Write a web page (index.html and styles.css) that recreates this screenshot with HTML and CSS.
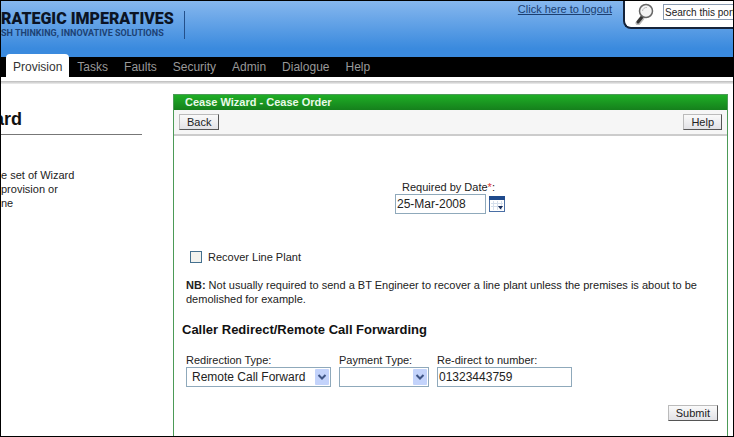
FILE: index.html
```html
<!DOCTYPE html>
<html lang="en">
    <head>
        <meta charset="utf-8">
        <title>Cease Wizard - Cease Order</title>
        <link rel="stylesheet" href="styles.css">
    </head>
    <body>

        <header class="header">
            <div class="logo">
                <div class="logo-name">RATEGIC IMPERATIVES</div>
                <div class="logo-tagline">SH THINKING, INNOVATIVE SOLUTIONS</div>
            </div>

            <a href="#" class="logout">Click here to logout</a>

            <form class="search">
                <svg class="search-icon" width="20" height="22" viewBox="0 0 20 22">
                    <path d="M3 20 L7 15" stroke="#bbb" stroke-width="5" stroke-linecap="round"/>
                    <path d="M3 19 L7 14" stroke="#333" stroke-width="3" stroke-linecap="round"/>
                    <circle cx="11" cy="8" r="6.5" fill="#f4f4f4" stroke="#666" stroke-width="1.5"/>
                    <path d="M7.5 8 A4 4 0 0 1 12 4.5" fill="none" stroke="#bbb"/>
                </svg>
                <input type="text" class="search-box" value="Search this port" aria-label="Search this portal">
            </form>
        </header>

        <nav class="menu">
            <a href="#" class="active">Provision</a>
            <a href="#">Tasks</a>
            <a href="#">Faults</a>
            <a href="#">Security</a>
            <a href="#">Admin</a>
            <a href="#">Dialogue</a>
            <a href="#">Help</a>
        </nav>

        <div class="divider"></div>

        <div class="content">

            <aside class="sidebar">
                <h1>ard</h1>
                <p>e set of Wizard<br>provision or<br>ne</p>
            </aside>

            <main class="panel">
                <h2 class="panel-title">Cease Wizard - Cease Order</h2>

                <div class="toolbar">
                    <button type="button">Back</button>
                    <button type="button">Help</button>
                </div>

                <form class="order">

                    <div class="date">
                        <label for="date">Required by Date<span class="required">*</span>:</label>
                        <div class="date-row">
                            <input type="text" id="date" value="25-Mar-2008">
                            <button type="button" class="calendar" aria-label="Pick a date">
                                <svg width="16" height="16" viewBox="0 0 16 16">
                                    <rect x="0.5" y="0.5" width="15" height="15" fill="#fff" stroke="#4a6fa5"/>
                                    <rect width="16" height="4" fill="#1f4a8c"/>
                                    <path d="M2 7.5H14M2 10.5H14M4.5 5V14M8.5 5V14M12.5 5V14" stroke="#d5dfec"/>
                                    <path d="M9 10H14L11.5 13.5Z" fill="#1a2f5c"/>
                                </svg>
                            </button>
                        </div>
                    </div>

                    <div class="check">
                        <input type="checkbox" id="recover">
                        <label for="recover">Recover Line Plant</label>
                    </div>

                    <p class="note"><b>NB:</b> Not usually required to send a BT Engineer to recover a line plant unless the premises is about to be demolished for example.</p>

                    <h3>Caller Redirect/Remote Call Forwarding</h3>

                    <div class="fields">
                        <div class="field redirection">
                            <label for="redirection">Redirection Type:</label>
                            <div class="select">
                                <select id="redirection">
                                    <option>Remote Call Forward</option>
                                </select>
                                <svg class="arrow" width="14" height="16" viewBox="0 0 14 16">
                                    <rect width="14" height="16" rx="1" fill="#c3d3fb"/>
                                    <path d="M3.5 6 L7 9.5 L10.5 6" fill="none" stroke="#3f5585" stroke-width="2"/>
                                </svg>
                            </div>
                        </div>

                        <div class="field payment">
                            <label for="payment">Payment Type:</label>
                            <div class="select">
                                <select id="payment">
                                    <option></option>
                                </select>
                                <svg class="arrow" width="14" height="16" viewBox="0 0 14 16">
                                    <rect width="14" height="16" rx="1" fill="#c3d3fb"/>
                                    <path d="M3.5 6 L7 9.5 L10.5 6" fill="none" stroke="#3f5585" stroke-width="2"/>
                                </svg>
                            </div>
                        </div>

                        <div class="field number">
                            <label for="number">Re-direct to number:</label>
                            <input type="text" id="number" value="01323443759">
                        </div>
                    </div>

                    <div class="actions">
                        <button type="submit">Submit</button>
                    </div>

                </form>
            </main>

        </div>

    </body>
</html>
```

FILE: styles.css
```css
* {
    margin: 0;
    padding: 0;
    box-sizing: border-box;
}

body {
    display: flex;
    flex-direction: column;
    min-height: 100vh;
    border: 1px solid #000;
    background: #fff;
    color: #222;
    font-family: "Liberation Sans", Arial, sans-serif;
    font-size: 11px;
    line-height: 14px;
}

input, select, button {
    font-family: inherit;
    font-size: 12px;
    color: #222;
}

/* header */

.header {
    display: flex;
    align-items: flex-start;
    height: 56px;
    background: linear-gradient(#86b7ee, #3a8ade 85%);
}

.logo {
    width: 184px;
    margin-top: 10px;
    border-right: 1px solid #24508a;
    white-space: nowrap;
    color: #0b1424;
    font-family: Roboto, sans-serif;
}

.logo-name {
    font-size: 16px;
    line-height: 16px;
    font-weight: 900;
}

.logo-tagline {
    font-size: 9px;
    line-height: 12px;
    font-weight: bold;
    color: #1d4274;
}

.logout {
    margin-top: 1px;
    margin-left: auto;
    margin-right: 11px;
    color: #1c3f70;
}

.search {
    display: flex;
    width: 110px;
    height: 28px;
    padding: 2px 0 0 10px;
    gap: 8px;
    background: #fff;
    border: solid #14233b;
    border-width: 0 0 2px 2px;
    border-bottom-left-radius: 8px;
}

.search-icon {
    flex: none;
}

.search-box {
    flex: 1;
    min-width: 0;
    height: 16px;
    margin-top: 1px;
    border: 1px solid #8a9bb0;
    border-right: 0;
    font-size: 10px;
    text-indent: 1px;
}

/* menu */

.menu {
    display: flex;
    height: 20px;
    padding-left: 5px;
    background: #000;
}

.menu a {
    padding: 0 8px;
    color: #999;
    font-size: 12px;
    line-height: 20px;
    text-decoration: none;
}

.menu a.active {
    height: 23px;
    margin-top: -3px;
    padding: 3px 7px 0;
    background: #fff;
    border-radius: 4px 4px 0 0;
    color: #333;
}

.divider {
    height: 3px;
    margin-top: 4px;
    background: linear-gradient(#bbb, #eee);
}

/* content */

.content {
    display: flex;
    flex: 1;
    padding: 10px 5px 0 0;
}

.sidebar {
    width: 141px;
    margin-right: 31px;
    overflow: hidden;
}

.sidebar h1 {
    padding: 14px 0 4px;
    border-bottom: 1px solid #777;
    color: #111;
    font-size: 18px;
    line-height: 22px;
    text-indent: -7px;
}

.sidebar p {
    margin-top: 33px;
    white-space: nowrap;
}

.panel {
    flex: 1;
    border: 1px solid #4c9a57;
    border-bottom: 0;
}

.panel-title {
    height: 15px;
    padding-left: 11px;
    background: linear-gradient(#1fae26, #15801c);
    color: #e9f9e9;
    font-size: 11px;
    line-height: 15px;
}

.toolbar {
    display: flex;
    justify-content: space-between;
    padding: 4px 5px;
    background: #f6f6f6;
    border-bottom: 2px solid #ccc;
}

.toolbar button, .actions button {
    height: 16px;
    padding: 0 7px;
    background: linear-gradient(#fafafa, #e2e2e6);
    border: 1px solid #bbb;
    border-right-color: #555;
    border-bottom-color: #555;
    font-size: 11px;
    line-height: 14px;
}

/* order form */

.order {
    padding: 44px 9px 0 8px;
}

.order input[type="text"] {
    width: 100%;
    height: 20px;
    padding: 0 1px;
    border: 1px solid #8fa9bb;
}

.date {
    width: 110px;
    margin: 0 auto;
}

.date label {
    display: block;
    padding-left: 7px;
}

.required {
    color: #d33;
}

.date-row {
    display: flex;
    align-items: center;
    gap: 3px;
}

.calendar {
    display: flex;
    border: 0;
    background: none;
}

.check {
    display: flex;
    align-items: center;
    gap: 6px;
    margin: 36px 0 14px 8px;
}

.check input {
    appearance: none;
    width: 12px;
    height: 12px;
    border: 1px solid #44708f;
    background: #f2f2ee;
}

.note {
    padding-left: 4px;
}

.order h3 {
    margin: 16px 0 15px;
    color: #111;
    font-size: 13px;
    line-height: 16px;
}

.fields {
    display: flex;
    gap: 8px;
    padding-left: 4px;
}

.redirection {
    width: 145px;
}

.payment {
    width: 90px;
}

.number {
    width: 135px;
}

.field label {
    display: block;
}

.select {
    position: relative;
}

.select select {
    display: block;
    appearance: none;
    width: 100%;
    height: 20px;
    padding-left: 5px;
    border: 1px solid #8fa9bb;
    background: #fff;
}

.arrow {
    position: absolute;
    top: 2px;
    right: 2px;
    pointer-events: none;
}

.actions {
    display: flex;
    justify-content: flex-end;
    margin-top: 18px;
}
```
